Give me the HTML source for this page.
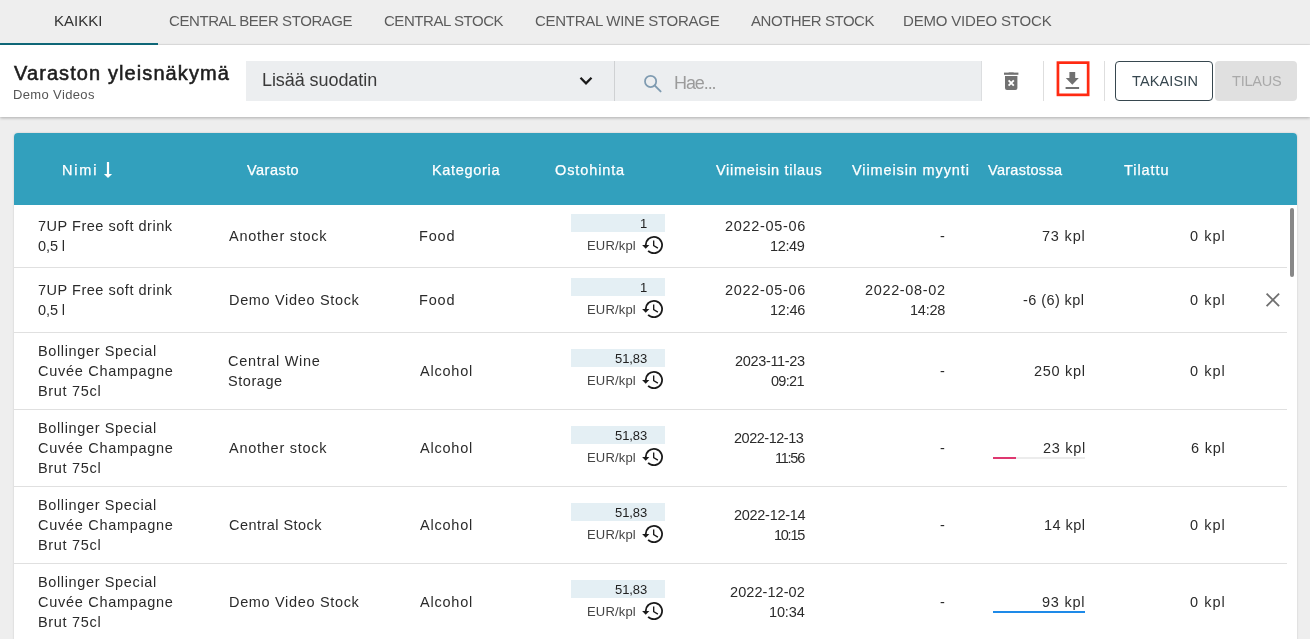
<!DOCTYPE html>
<html><head><meta charset="utf-8">
<style>
*{box-sizing:border-box}
html,body{margin:0;padding:0}
body{width:1310px;height:639px;overflow:hidden;position:relative;background:#eeeeee;font-family:"Liberation Sans",sans-serif}
.t{position:absolute;white-space:nowrap;z-index:5;will-change:transform}
.ic{position:absolute;z-index:5}
.abs{position:absolute}
.pbox{position:absolute;left:571px;width:94px;height:18px;background:#e4eff4;z-index:2}
.rb{position:absolute;left:14px;width:1273px;height:1px;background:#e0e0e0;z-index:3}
</style></head><body>
<!-- tab bar -->
<div class="abs" style="left:0;top:0;width:1310px;height:45px;background:#eeeeee"></div>
<div class="abs" style="left:0;top:44px;width:1310px;height:1px;background:#e3e3e3"></div>
<div class="abs" style="left:0;top:43px;width:158px;height:2px;background:#0f6a7b"></div>
<!-- toolbar -->
<div class="abs" style="left:0;top:45px;width:1310px;height:72px;background:#ffffff;box-shadow:0 1px 3px rgba(0,0,0,0.28)"></div>
<div class="abs" style="left:246px;top:61px;width:368px;height:40px;background:#eceef0"></div>
<div class="abs" style="left:614px;top:61px;width:1px;height:40px;background:#cfd1d3"></div>
<div class="abs" style="left:615px;top:61px;width:367px;height:40px;background:#eceef0;border-right:1px solid #dcdee0"></div>
<svg class="ic" style="left:579px;top:76px" width="14" height="10" viewBox="0 0 14 10"><path d="M1.5 1.8 L7 7.3 L12.5 1.8" fill="none" stroke="#1a1a1a" stroke-width="2.3"/></svg>
<svg class="ic" style="left:642px;top:73px" width="21" height="21" viewBox="0 0 21 21"><circle cx="8.6" cy="8.4" r="5.6" fill="none" stroke="#7f9bb1" stroke-width="1.75"/><path d="M12.6 12.4 L18.6 18.4" stroke="#7f9bb1" stroke-width="1.9" stroke-linecap="round"/></svg>
<!-- trash -->
<svg class="ic" style="left:1003px;top:71px" width="17" height="20" viewBox="0 0 17 20"><rect x="1" y="1.6" width="14.4" height="2.2" fill="#717171"/><rect x="5.5" y="1.4" width="5.4" height="1.6" rx="0.6" fill="#717171"/><path d="M2 5 H14.4 V17 a2 2 0 0 1 -2 2 H4 a2 2 0 0 1 -2 -2 Z" fill="#717171"/><path d="M5.6 9.4 L10.8 14.6 M10.8 9.4 L5.6 14.6" stroke="#fff" stroke-width="1.9"/></svg>
<div class="abs" style="left:1043px;top:61px;width:1px;height:40px;background:#dedede"></div>
<!-- download -->
<svg class="ic" style="left:1056px;top:61px" width="34" height="36" viewBox="0 0 34 36"><rect x="1.95" y="1.65" width="30.2" height="32.2" fill="none" stroke="#ff2a12" stroke-width="2.7"/></svg>
<svg class="ic" style="left:1064px;top:71px" width="17" height="20" viewBox="0 0 17 20"><path d="M5.4 1 H11.2 V7 H14.8 L8.3 13.7 L1.8 7 H5.4 Z" fill="#717171"/><rect x="1.6" y="16" width="13.5" height="2" fill="#717171"/></svg>
<div class="abs" style="left:1104px;top:61px;width:1px;height:40px;background:#dedede"></div>
<!-- buttons -->
<div class="abs" style="left:1115px;top:61px;width:98px;height:40px;border:1.3px solid #37474f;border-radius:4px;background:#fff"></div>
<div class="abs" style="left:1215px;top:61px;width:82px;height:40px;border-radius:4px;background:#e0e0e0"></div>
<!-- table -->
<div class="abs" style="left:14px;top:133px;width:1283px;height:520px;background:#ffffff;border-radius:4px 4px 0 0;box-shadow:0 0 2px rgba(0,0,0,0.18)"></div>
<div class="abs" style="left:14px;top:133px;width:1283px;height:72px;background:#32a0bd;border-radius:4px 4px 0 0"></div>
<svg class="ic" style="left:103px;top:161px" width="10" height="18" viewBox="0 0 10 18"><rect x="3.9" y="1" width="2.2" height="12.5" fill="#fff"/><path d="M0.9 13 L9.1 13 L5 17 Z" fill="#fff"/></svg>
<div class="rb" style="top:267px"></div>
<div class="rb" style="top:332px"></div>
<div class="rb" style="top:409px"></div>
<div class="rb" style="top:486px"></div>
<div class="rb" style="top:563px"></div>
<!-- scrollbar -->
<div class="abs" style="left:1290px;top:208px;width:4px;height:69px;border-radius:2px;background:#878787"></div>
<!-- close X -->
<svg class="ic" style="left:1265px;top:292px" width="16" height="16" viewBox="0 0 16 16"><path d="M1.6 1.6 L14.1 14.1 M14.1 1.6 L1.6 14.1" stroke="#707070" stroke-width="1.85"/></svg>
<!-- stock bars -->
<div class="abs" style="left:993px;top:457px;width:92px;height:2px;background:#ececec"></div>
<div class="abs" style="left:993px;top:457px;width:23px;height:2px;background:#de3870"></div>
<div class="abs" style="left:993px;top:611px;width:92px;height:2px;background:#1e8ae8"></div>
<div class="t" style="left:54.00px;top:13.00px;font-size:15px;line-height:15px;color:#333;font-weight:normal;letter-spacing:0.000px;" id="tab0">KAIKKI</div>
<div class="t" style="left:169.00px;top:13.00px;font-size:15px;line-height:15px;color:#5c5c5c;font-weight:normal;letter-spacing:-0.426px;" id="tab1">CENTRAL BEER STORAGE</div>
<div class="t" style="left:383.80px;top:13.00px;font-size:15px;line-height:15px;color:#5c5c5c;font-weight:normal;letter-spacing:-0.458px;" id="tab2">CENTRAL STOCK</div>
<div class="t" style="left:535.20px;top:13.00px;font-size:15px;line-height:15px;color:#5c5c5c;font-weight:normal;letter-spacing:-0.284px;" id="tab3">CENTRAL WINE STORAGE</div>
<div class="t" style="left:750.60px;top:13.00px;font-size:15px;line-height:15px;color:#5c5c5c;font-weight:normal;letter-spacing:-0.450px;" id="tab4">ANOTHER STOCK</div>
<div class="t" style="left:903.00px;top:13.00px;font-size:15px;line-height:15px;color:#5c5c5c;font-weight:normal;letter-spacing:-0.180px;" id="tab5">DEMO VIDEO STOCK</div>
<div class="t" style="left:14.00px;top:63.00px;font-size:20px;line-height:20px;color:#1e1e1e;font-weight:normal;letter-spacing:1.089px;-webkit-text-stroke:0.55px #1e1e1e;" id="title">Varaston yleisnäkymä</div>
<div class="t" style="left:13.00px;top:88.00px;font-size:13px;line-height:13px;color:#555;font-weight:normal;letter-spacing:0.360px;" id="sub">Demo Videos</div>
<div class="t" style="left:261.80px;top:71.30px;font-size:18px;line-height:18px;color:#3a3a3a;font-weight:normal;letter-spacing:-0.069px;" id="filt">Lisää suodatin</div>
<div class="t" style="left:673.60px;top:74.20px;font-size:18px;line-height:18px;color:#9b9b9b;font-weight:normal;letter-spacing:-1.080px;" id="hae">Hae...</div>
<div class="t" style="left:1131.60px;top:74.00px;font-size:14.5px;line-height:14.5px;color:#37474f;font-weight:normal;letter-spacing:0.129px;" id="tak">TAKAISIN</div>
<div class="t" style="left:1231.60px;top:74.00px;font-size:14.5px;line-height:14.5px;color:#a9a9a9;font-weight:normal;letter-spacing:-0.198px;" id="til">TILAUS</div>
<div class="t" style="left:61.60px;top:162.60px;font-size:14.5px;line-height:14.5px;color:#fff;font-weight:normal;letter-spacing:1.830px;-webkit-text-stroke:0.25px #fff;" id="h0">Nimi</div>
<div class="t" style="left:247.20px;top:162.60px;font-size:14.5px;line-height:14.5px;color:#fff;font-weight:normal;letter-spacing:0.465px;-webkit-text-stroke:0.25px #fff;" id="h1">Varasto</div>
<div class="t" style="left:432.20px;top:162.60px;font-size:14.5px;line-height:14.5px;color:#fff;font-weight:normal;letter-spacing:0.686px;-webkit-text-stroke:0.25px #fff;" id="h2">Kategoria</div>
<div class="t" style="left:555.20px;top:162.60px;font-size:14.5px;line-height:14.5px;color:#fff;font-weight:normal;letter-spacing:0.889px;-webkit-text-stroke:0.25px #fff;" id="h3">Ostohinta</div>
<div class="t" style="left:716.40px;top:162.60px;font-size:14.5px;line-height:14.5px;color:#fff;font-weight:normal;letter-spacing:0.678px;-webkit-text-stroke:0.25px #fff;" id="h4">Viimeisin tilaus</div>
<div class="t" style="left:852.40px;top:162.60px;font-size:14.5px;line-height:14.5px;color:#fff;font-weight:normal;letter-spacing:0.882px;-webkit-text-stroke:0.25px #fff;" id="h5">Viimeisin myynti</div>
<div class="t" style="left:988.20px;top:162.60px;font-size:14.5px;line-height:14.5px;color:#fff;font-weight:normal;letter-spacing:0.280px;-webkit-text-stroke:0.25px #fff;" id="h6">Varastossa</div>
<div class="t" style="left:1123.80px;top:162.60px;font-size:14.5px;line-height:14.5px;color:#fff;font-weight:normal;letter-spacing:0.930px;-webkit-text-stroke:0.25px #fff;" id="h7">Tilattu</div>
<div class="t" style="left:37.80px;top:219.00px;font-size:14.5px;line-height:14.5px;color:#2b2b2b;font-weight:normal;letter-spacing:0.520px;" id="r0n0">7UP Free soft drink</div>
<div class="t" style="left:37.80px;top:239.00px;font-size:14.5px;line-height:14.5px;color:#2b2b2b;font-weight:normal;letter-spacing:-0.099px;" id="r0n1">0,5 l</div>
<div class="t" style="left:228.80px;top:229.00px;font-size:14.5px;line-height:14.5px;color:#2b2b2b;font-weight:normal;letter-spacing:0.742px;" id="r0s0">Another stock</div>
<div class="t" style="left:419.40px;top:229.00px;font-size:14.5px;line-height:14.5px;color:#2b2b2b;font-weight:normal;letter-spacing:0.810px;" id="r0c">Food</div>
<div class="t" style="right:663.00px;text-align:right;top:217.00px;font-size:13px;line-height:13px;color:#222;font-weight:normal;letter-spacing:0.000px;" id="r0p">1</div>
<div class="t" style="left:587.20px;top:239.00px;font-size:13px;line-height:13px;color:#444;font-weight:normal;letter-spacing:0.180px;" id="r0e">EUR/kpl</div>
<div class="t" style="right:504.20px;text-align:right;top:219.00px;font-size:14.5px;line-height:14.5px;color:#2b2b2b;font-weight:normal;letter-spacing:0.690px;" id="r0d0">2022-05-06</div>
<div class="t" style="right:505.20px;text-align:right;top:239.00px;font-size:14.5px;line-height:14.5px;color:#2b2b2b;font-weight:normal;letter-spacing:-0.360px;" id="r0d1">12:49</div>
<div class="t" style="right:365.40px;text-align:right;top:229.00px;font-size:14.5px;line-height:14.5px;color:#2b2b2b;font-weight:normal;letter-spacing:0.000px;" id="r0m0">-</div>
<div class="t" style="right:224.20px;text-align:right;top:229.00px;font-size:14.5px;line-height:14.5px;color:#2b2b2b;font-weight:normal;letter-spacing:0.810px;" id="r0v">73 kpl</div>
<div class="t" style="right:84.40px;text-align:right;top:229.00px;font-size:14.5px;line-height:14.5px;color:#2b2b2b;font-weight:normal;letter-spacing:1.035px;" id="r0o">0 kpl</div>
<div class="t" style="left:37.80px;top:283.00px;font-size:14.5px;line-height:14.5px;color:#2b2b2b;font-weight:normal;letter-spacing:0.520px;" id="r1n0">7UP Free soft drink</div>
<div class="t" style="left:37.80px;top:303.00px;font-size:14.5px;line-height:14.5px;color:#2b2b2b;font-weight:normal;letter-spacing:-0.099px;" id="r1n1">0,5 l</div>
<div class="t" style="left:229.20px;top:293.00px;font-size:14.5px;line-height:14.5px;color:#2b2b2b;font-weight:normal;letter-spacing:0.668px;" id="r1s0">Demo Video Stock</div>
<div class="t" style="left:419.40px;top:293.00px;font-size:14.5px;line-height:14.5px;color:#2b2b2b;font-weight:normal;letter-spacing:0.810px;" id="r1c">Food</div>
<div class="t" style="right:663.00px;text-align:right;top:281.00px;font-size:13px;line-height:13px;color:#222;font-weight:normal;letter-spacing:0.000px;" id="r1p">1</div>
<div class="t" style="left:587.20px;top:303.00px;font-size:13px;line-height:13px;color:#444;font-weight:normal;letter-spacing:0.180px;" id="r1e">EUR/kpl</div>
<div class="t" style="right:504.20px;text-align:right;top:283.00px;font-size:14.5px;line-height:14.5px;color:#2b2b2b;font-weight:normal;letter-spacing:0.690px;" id="r1d0">2022-05-06</div>
<div class="t" style="right:505.20px;text-align:right;top:303.00px;font-size:14.5px;line-height:14.5px;color:#2b2b2b;font-weight:normal;letter-spacing:-0.248px;" id="r1d1">12:46</div>
<div class="t" style="right:364.20px;text-align:right;top:283.00px;font-size:14.5px;line-height:14.5px;color:#2b2b2b;font-weight:normal;letter-spacing:0.650px;" id="r1m0">2022-08-02</div>
<div class="t" style="right:365.20px;text-align:right;top:303.00px;font-size:14.5px;line-height:14.5px;color:#2b2b2b;font-weight:normal;letter-spacing:-0.248px;" id="r1m1">14:28</div>
<div class="t" style="right:225.20px;text-align:right;top:293.00px;font-size:14.5px;line-height:14.5px;color:#2b2b2b;font-weight:normal;letter-spacing:0.420px;" id="r1v">-6 (6) kpl</div>
<div class="t" style="right:84.40px;text-align:right;top:293.00px;font-size:14.5px;line-height:14.5px;color:#2b2b2b;font-weight:normal;letter-spacing:1.035px;" id="r1o">0 kpl</div>
<div class="t" style="left:37.80px;top:344.00px;font-size:14.5px;line-height:14.5px;color:#2b2b2b;font-weight:normal;letter-spacing:0.636px;" id="r2n0">Bollinger Special</div>
<div class="t" style="left:37.80px;top:364.00px;font-size:14.5px;line-height:14.5px;color:#2b2b2b;font-weight:normal;letter-spacing:0.714px;" id="r2n1">Cuvée Champagne</div>
<div class="t" style="left:37.80px;top:384.00px;font-size:14.5px;line-height:14.5px;color:#2b2b2b;font-weight:normal;letter-spacing:0.686px;" id="r2n2">Brut 75cl</div>
<div class="t" style="left:227.80px;top:354.00px;font-size:14.5px;line-height:14.5px;color:#2b2b2b;font-weight:normal;letter-spacing:0.736px;" id="r2s0">Central Wine</div>
<div class="t" style="left:227.80px;top:374.00px;font-size:14.5px;line-height:14.5px;color:#2b2b2b;font-weight:normal;letter-spacing:0.555px;" id="r2s1">Storage</div>
<div class="t" style="left:420.40px;top:364.00px;font-size:14.5px;line-height:14.5px;color:#2b2b2b;font-weight:normal;letter-spacing:0.780px;" id="r2c">Alcohol</div>
<div class="t" style="right:663.00px;text-align:right;top:352.00px;font-size:13px;line-height:13px;color:#222;font-weight:normal;letter-spacing:-0.068px;" id="r2p">51,83</div>
<div class="t" style="left:587.20px;top:374.00px;font-size:13px;line-height:13px;color:#444;font-weight:normal;letter-spacing:0.180px;" id="r2e">EUR/kpl</div>
<div class="t" style="right:505.40px;text-align:right;top:354.00px;font-size:14.5px;line-height:14.5px;color:#2b2b2b;font-weight:normal;letter-spacing:-0.332px;" id="r2d0">2023-11-23</div>
<div class="t" style="right:506.20px;text-align:right;top:374.00px;font-size:14.5px;line-height:14.5px;color:#2b2b2b;font-weight:normal;letter-spacing:-0.698px;" id="r2d1">09:21</div>
<div class="t" style="right:365.40px;text-align:right;top:364.00px;font-size:14.5px;line-height:14.5px;color:#2b2b2b;font-weight:normal;letter-spacing:0.000px;" id="r2m0">-</div>
<div class="t" style="right:224.20px;text-align:right;top:364.00px;font-size:14.5px;line-height:14.5px;color:#2b2b2b;font-weight:normal;letter-spacing:0.705px;" id="r2v">250 kpl</div>
<div class="t" style="right:84.40px;text-align:right;top:364.00px;font-size:14.5px;line-height:14.5px;color:#2b2b2b;font-weight:normal;letter-spacing:1.035px;" id="r2o">0 kpl</div>
<div class="t" style="left:37.80px;top:421.00px;font-size:14.5px;line-height:14.5px;color:#2b2b2b;font-weight:normal;letter-spacing:0.636px;" id="r3n0">Bollinger Special</div>
<div class="t" style="left:37.80px;top:441.00px;font-size:14.5px;line-height:14.5px;color:#2b2b2b;font-weight:normal;letter-spacing:0.714px;" id="r3n1">Cuvée Champagne</div>
<div class="t" style="left:37.80px;top:461.00px;font-size:14.5px;line-height:14.5px;color:#2b2b2b;font-weight:normal;letter-spacing:0.686px;" id="r3n2">Brut 75cl</div>
<div class="t" style="left:228.80px;top:441.00px;font-size:14.5px;line-height:14.5px;color:#2b2b2b;font-weight:normal;letter-spacing:0.742px;" id="r3s0">Another stock</div>
<div class="t" style="left:420.40px;top:441.00px;font-size:14.5px;line-height:14.5px;color:#2b2b2b;font-weight:normal;letter-spacing:0.780px;" id="r3c">Alcohol</div>
<div class="t" style="right:663.00px;text-align:right;top:429.00px;font-size:13px;line-height:13px;color:#222;font-weight:normal;letter-spacing:-0.068px;" id="r3p">51,83</div>
<div class="t" style="left:587.20px;top:451.00px;font-size:13px;line-height:13px;color:#444;font-weight:normal;letter-spacing:0.180px;" id="r3e">EUR/kpl</div>
<div class="t" style="right:506.40px;text-align:right;top:431.00px;font-size:14.5px;line-height:14.5px;color:#2b2b2b;font-weight:normal;letter-spacing:-0.488px;" id="r3d0">2022-12-13</div>
<div class="t" style="right:506.20px;text-align:right;top:451.00px;font-size:14.5px;line-height:14.5px;color:#2b2b2b;font-weight:normal;letter-spacing:-1.247px;" id="r3d1">11:56</div>
<div class="t" style="right:365.40px;text-align:right;top:441.00px;font-size:14.5px;line-height:14.5px;color:#2b2b2b;font-weight:normal;letter-spacing:0.000px;" id="r3m0">-</div>
<div class="t" style="right:224.20px;text-align:right;top:441.00px;font-size:14.5px;line-height:14.5px;color:#2b2b2b;font-weight:normal;letter-spacing:0.688px;" id="r3v">23 kpl</div>
<div class="t" style="right:84.40px;text-align:right;top:441.00px;font-size:14.5px;line-height:14.5px;color:#2b2b2b;font-weight:normal;letter-spacing:0.774px;" id="r3o">6 kpl</div>
<div class="t" style="left:37.80px;top:498.00px;font-size:14.5px;line-height:14.5px;color:#2b2b2b;font-weight:normal;letter-spacing:0.636px;" id="r4n0">Bollinger Special</div>
<div class="t" style="left:37.80px;top:518.00px;font-size:14.5px;line-height:14.5px;color:#2b2b2b;font-weight:normal;letter-spacing:0.714px;" id="r4n1">Cuvée Champagne</div>
<div class="t" style="left:37.80px;top:538.00px;font-size:14.5px;line-height:14.5px;color:#2b2b2b;font-weight:normal;letter-spacing:0.686px;" id="r4n2">Brut 75cl</div>
<div class="t" style="left:228.80px;top:518.00px;font-size:14.5px;line-height:14.5px;color:#2b2b2b;font-weight:normal;letter-spacing:0.462px;" id="r4s0">Central Stock</div>
<div class="t" style="left:420.40px;top:518.00px;font-size:14.5px;line-height:14.5px;color:#2b2b2b;font-weight:normal;letter-spacing:0.780px;" id="r4c">Alcohol</div>
<div class="t" style="right:663.00px;text-align:right;top:506.00px;font-size:13px;line-height:13px;color:#222;font-weight:normal;letter-spacing:-0.068px;" id="r4p">51,83</div>
<div class="t" style="left:587.20px;top:528.00px;font-size:13px;line-height:13px;color:#444;font-weight:normal;letter-spacing:0.180px;" id="r4e">EUR/kpl</div>
<div class="t" style="right:505.20px;text-align:right;top:508.00px;font-size:14.5px;line-height:14.5px;color:#2b2b2b;font-weight:normal;letter-spacing:-0.288px;" id="r4d0">2022-12-14</div>
<div class="t" style="right:506.20px;text-align:right;top:528.00px;font-size:14.5px;line-height:14.5px;color:#2b2b2b;font-weight:normal;letter-spacing:-1.260px;" id="r4d1">10:15</div>
<div class="t" style="right:365.40px;text-align:right;top:518.00px;font-size:14.5px;line-height:14.5px;color:#2b2b2b;font-weight:normal;letter-spacing:0.000px;" id="r4m0">-</div>
<div class="t" style="right:224.20px;text-align:right;top:518.00px;font-size:14.5px;line-height:14.5px;color:#2b2b2b;font-weight:normal;letter-spacing:0.443px;" id="r4v">14 kpl</div>
<div class="t" style="right:84.40px;text-align:right;top:518.00px;font-size:14.5px;line-height:14.5px;color:#2b2b2b;font-weight:normal;letter-spacing:1.035px;" id="r4o">0 kpl</div>
<div class="t" style="left:37.80px;top:575.00px;font-size:14.5px;line-height:14.5px;color:#2b2b2b;font-weight:normal;letter-spacing:0.636px;" id="r5n0">Bollinger Special</div>
<div class="t" style="left:37.80px;top:595.00px;font-size:14.5px;line-height:14.5px;color:#2b2b2b;font-weight:normal;letter-spacing:0.714px;" id="r5n1">Cuvée Champagne</div>
<div class="t" style="left:37.80px;top:615.00px;font-size:14.5px;line-height:14.5px;color:#2b2b2b;font-weight:normal;letter-spacing:0.686px;" id="r5n2">Brut 75cl</div>
<div class="t" style="left:229.20px;top:595.00px;font-size:14.5px;line-height:14.5px;color:#2b2b2b;font-weight:normal;letter-spacing:0.668px;" id="r5s0">Demo Video Stock</div>
<div class="t" style="left:420.40px;top:595.00px;font-size:14.5px;line-height:14.5px;color:#2b2b2b;font-weight:normal;letter-spacing:0.780px;" id="r5c">Alcohol</div>
<div class="t" style="right:663.00px;text-align:right;top:583.00px;font-size:13px;line-height:13px;color:#222;font-weight:normal;letter-spacing:-0.068px;" id="r5p">51,83</div>
<div class="t" style="left:587.20px;top:605.00px;font-size:13px;line-height:13px;color:#444;font-weight:normal;letter-spacing:0.180px;" id="r5e">EUR/kpl</div>
<div class="t" style="right:505.20px;text-align:right;top:585.00px;font-size:14.5px;line-height:14.5px;color:#2b2b2b;font-weight:normal;letter-spacing:0.062px;" id="r5d0">2022-12-02</div>
<div class="t" style="right:505.20px;text-align:right;top:605.00px;font-size:14.5px;line-height:14.5px;color:#2b2b2b;font-weight:normal;letter-spacing:-0.135px;" id="r5d1">10:34</div>
<div class="t" style="right:365.40px;text-align:right;top:595.00px;font-size:14.5px;line-height:14.5px;color:#2b2b2b;font-weight:normal;letter-spacing:0.000px;" id="r5m0">-</div>
<div class="t" style="right:224.20px;text-align:right;top:595.00px;font-size:14.5px;line-height:14.5px;color:#2b2b2b;font-weight:normal;letter-spacing:0.778px;" id="r5v">93 kpl</div>
<div class="t" style="right:84.40px;text-align:right;top:595.00px;font-size:14.5px;line-height:14.5px;color:#2b2b2b;font-weight:normal;letter-spacing:1.035px;" id="r5o">0 kpl</div>
<div class="pbox" style="top:214px"></div>
<svg class="ic" style="left:642px;top:235px" width="22" height="20" viewBox="0 0 24 22"><path fill="#1a1a1a" d="M13 1a10 10 0 0 0-10 10H0l4 4 4-4H5a8 8 0 1 1 2.34 5.66l-1.42 1.42A10 10 0 1 0 13 1zm-1 5v6l5 3 .75-1.23-4.25-2.52V6z"/></svg>
<div class="pbox" style="top:278px"></div>
<svg class="ic" style="left:642px;top:299px" width="22" height="20" viewBox="0 0 24 22"><path fill="#1a1a1a" d="M13 1a10 10 0 0 0-10 10H0l4 4 4-4H5a8 8 0 1 1 2.34 5.66l-1.42 1.42A10 10 0 1 0 13 1zm-1 5v6l5 3 .75-1.23-4.25-2.52V6z"/></svg>
<div class="pbox" style="top:349px"></div>
<svg class="ic" style="left:642px;top:370px" width="22" height="20" viewBox="0 0 24 22"><path fill="#1a1a1a" d="M13 1a10 10 0 0 0-10 10H0l4 4 4-4H5a8 8 0 1 1 2.34 5.66l-1.42 1.42A10 10 0 1 0 13 1zm-1 5v6l5 3 .75-1.23-4.25-2.52V6z"/></svg>
<div class="pbox" style="top:426px"></div>
<svg class="ic" style="left:642px;top:447px" width="22" height="20" viewBox="0 0 24 22"><path fill="#1a1a1a" d="M13 1a10 10 0 0 0-10 10H0l4 4 4-4H5a8 8 0 1 1 2.34 5.66l-1.42 1.42A10 10 0 1 0 13 1zm-1 5v6l5 3 .75-1.23-4.25-2.52V6z"/></svg>
<div class="pbox" style="top:503px"></div>
<svg class="ic" style="left:642px;top:524px" width="22" height="20" viewBox="0 0 24 22"><path fill="#1a1a1a" d="M13 1a10 10 0 0 0-10 10H0l4 4 4-4H5a8 8 0 1 1 2.34 5.66l-1.42 1.42A10 10 0 1 0 13 1zm-1 5v6l5 3 .75-1.23-4.25-2.52V6z"/></svg>
<div class="pbox" style="top:580px"></div>
<svg class="ic" style="left:642px;top:601px" width="22" height="20" viewBox="0 0 24 22"><path fill="#1a1a1a" d="M13 1a10 10 0 0 0-10 10H0l4 4 4-4H5a8 8 0 1 1 2.34 5.66l-1.42 1.42A10 10 0 1 0 13 1zm-1 5v6l5 3 .75-1.23-4.25-2.52V6z"/></svg>
</body></html>
